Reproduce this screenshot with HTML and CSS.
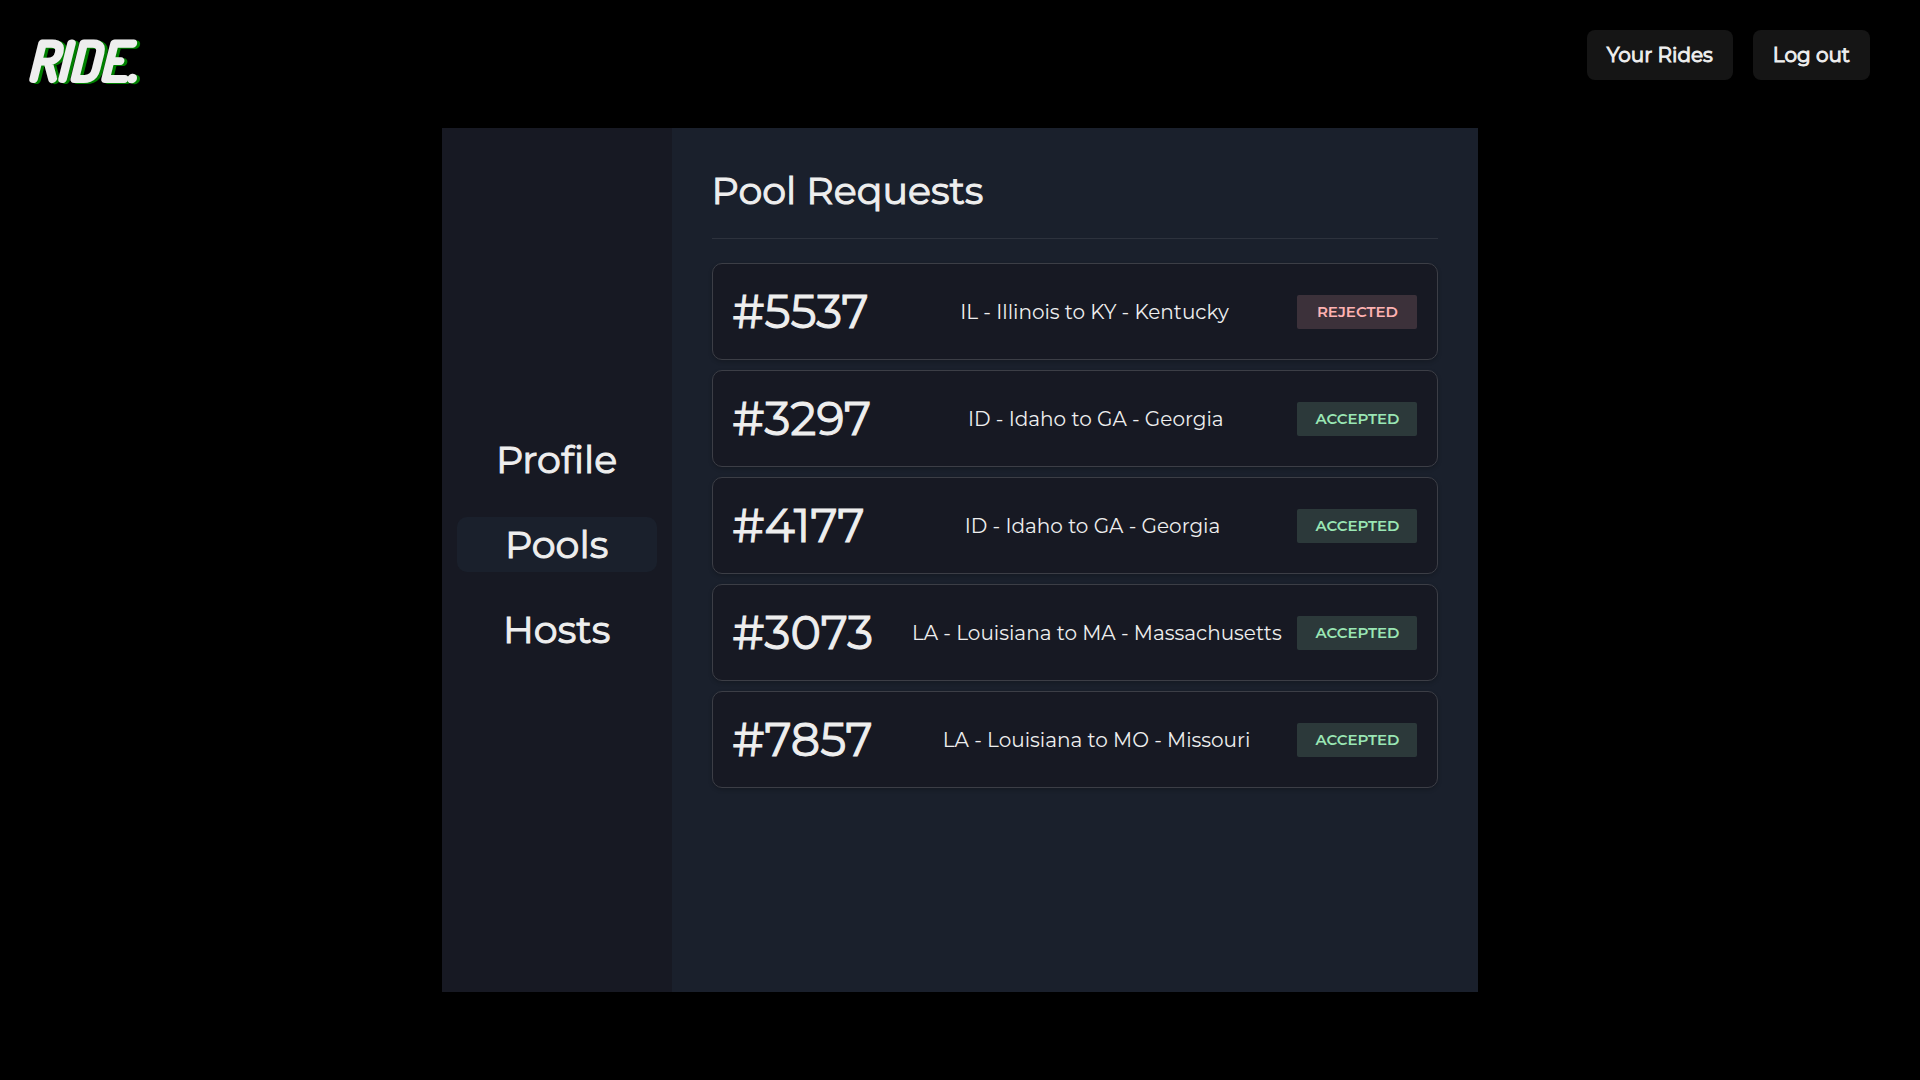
FILE: index.html
```html
<!DOCTYPE html>
<html lang="en">
<head>
  <meta charset="utf-8">
  <meta name="viewport" content="width=device-width, initial-scale=1">
  <title>Ride - Pool Requests</title>
  <link rel="stylesheet" href="styles.css">
</head>
<body>
  <header class="topbar">
    <a class="logo" href="#">
      <svg class="logo-art" width="120" height="60" viewBox="0 0 120 60">
        <text class="logo-shadow" x="2" y="52">RIDE.</text>
        <text class="logo-text" x="-1" y="51">RIDE.</text>
      </svg>
    </a>
    <nav class="actions">
      <button class="button" type="button">Your Rides</button>
      <button class="button" type="button">Log out</button>
    </nav>
  </header>
  <main class="panel">
    <nav class="sidebar">
      <a class="tab" href="#">Profile</a>
      <a class="tab tab-active" href="#" aria-current="page">Pools</a>
      <a class="tab" href="#">Hosts</a>
    </nav>
    <section class="content">
      <h1 class="title">Pool Requests</h1>
      <ul class="requests">
        <li class="request">
          <span class="number">#5537</span>
          <span class="route">IL - Illinois to KY - Kentucky</span>
          <span class="badge rejected">REJECTED</span>
        </li>
        <li class="request">
          <span class="number">#3297</span>
          <span class="route">ID - Idaho to GA - Georgia</span>
          <span class="badge accepted">ACCEPTED</span>
        </li>
        <li class="request">
          <span class="number">#4177</span>
          <span class="route">ID - Idaho to GA - Georgia</span>
          <span class="badge accepted">ACCEPTED</span>
        </li>
        <li class="request">
          <span class="number">#3073</span>
          <span class="route">LA - Louisiana to MA - Massachusetts</span>
          <span class="badge accepted">ACCEPTED</span>
        </li>
        <li class="request">
          <span class="number">#7857</span>
          <span class="route">LA - Louisiana to MO - Missouri</span>
          <span class="badge accepted">ACCEPTED</span>
        </li>
      </ul>
    </section>
  </main>
</body>
</html>
```
FILE: styles.css
```css
* {
  box-sizing: border-box;
}

body {
  margin: 0;
  min-height: 100vh;
  background: #000;
  color: #eee;
  font-family: Montserrat, Inter, sans-serif;
  font-size: 20px;
}

a {
  color: inherit;
  text-decoration: none;
}

.topbar {
  display: flex;
  justify-content: space-between;
  align-items: flex-start;
  height: 128px;
  padding: 30px 50px 0 28px;
}

.logo-art {
  display: block;
  overflow: visible;
  font-family: Dosis, "Roboto Condensed", sans-serif;
  font-size: 54px;
  font-weight: 500;
  font-style: italic;
  stroke-width: 4px;
  stroke-linejoin: round;
}

.logo-text {
  fill: #eee;
  stroke: #eee;
}

.logo-shadow {
  fill: #008000;
  stroke: #008000;
}

.actions {
  display: flex;
  gap: 20px;
}

.button {
  height: 50px;
  padding: 0 20px;
  border: 0;
  border-radius: 8px;
  background: #151515;
  color: inherit;
  font: inherit;
  -webkit-text-stroke: 1px currentColor;
  cursor: pointer;
}

.panel {
  display: flex;
  width: 54%;
  min-height: 80vh;
  margin: 0 auto;
  background: #1a202c;
}

.sidebar {
  display: flex;
  flex: 0 0 230px;
  flex-direction: column;
  justify-content: center;
  gap: 30px;
  padding: 0 15px 32px;
  background: #171923;
}

.tab {
  border-radius: 10px;
  font-size: 38px;
  line-height: 55px;
  text-align: center;
  -webkit-text-stroke: 1px currentColor;
}

.tab-active {
  background: #1a202c;
}

.content {
  flex: 1;
  padding: 36px 40px;
}

.title {
  margin: 0 0 24px;
  padding-bottom: 20px;
  border-bottom: 1px solid #2d323d;
  font-size: 38px;
  font-weight: 400;
  line-height: 54px;
  -webkit-text-stroke: 1px currentColor;
}

.requests {
  display: flex;
  flex-direction: column;
  gap: 10px;
  margin: 0;
  padding: 0;
  list-style: none;
}

.request {
  display: flex;
  align-items: center;
  min-height: 97px;
  padding: 0 20px;
  border: 1px solid #3c3e46;
  border-radius: 10px;
  background: #171923;
  box-shadow: 0 2px 4px rgba(0, 0, 0, 0.2);
}

.number {
  font-size: 46px;
  -webkit-text-stroke: 1px currentColor;
}

.route {
  flex: 1;
  padding: 0 15px 0 38px;
  text-align: center;
}

.badge {
  width: 120px;
  border-radius: 2px;
  font-size: 15px;
  font-weight: 600;
  line-height: 34px;
  text-align: center;
}

.rejected {
  background: rgba(254, 178, 178, 0.16);
  color: #feb2b2;
}

.accepted {
  background: rgba(154, 230, 180, 0.16);
  color: #9ae6b4;
}
```
